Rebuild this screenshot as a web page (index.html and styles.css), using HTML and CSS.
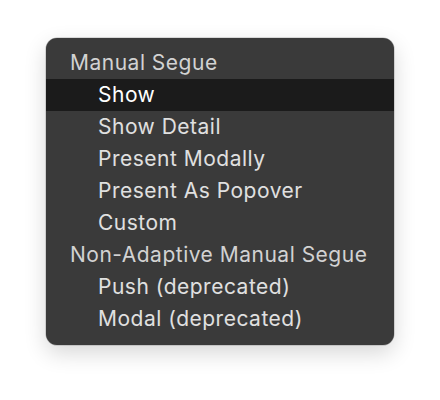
FILE: index.html
```html
<!DOCTYPE html>
<html>
<head>
<meta charset="utf-8">
<link rel="stylesheet" href="styles.css">
</head>
<body>
<div class="stage">
  <div class="menu">
    <div class="row header">Manual Segue</div>
    <div class="row item selected">Show</div>
    <div class="row item">Show Detail</div>
    <div class="row item">Present Modally</div>
    <div class="row item">Present As Popover</div>
    <div class="row item">Custom</div>
    <div class="row header">Non-Adaptive Manual Segue</div>
    <div class="row item">Push (deprecated)</div>
    <div class="row item">Modal (deprecated)</div>
  </div>
</div>
</body>
</html>
```
FILE: styles.css
```css
html, body {
  margin: 0;
  padding: 0;
  background: #ffffff;
}
.stage {
  width: 440px;
  height: 400px;
  padding: 38px 0 0 46px;
  box-sizing: border-box;
}
.menu {
  width: 348px;
  box-sizing: border-box;
  padding: 9px 0 10px;
  background: #3a3a3a;
  border-radius: 11px;
  box-shadow: 0 0 0 0.5px rgba(0,0,0,0.25), 0 8px 22px rgba(0,0,0,0.16);
  font-family: Inter, "Liberation Sans", sans-serif;
  font-size: 21px;
  letter-spacing: 0.5px;
  color: #e0e0e0;
}
.row {
  height: 32px;
  line-height: 32px;
  white-space: nowrap;
}
.header {
  padding-left: 24px;
  color: #d2d2d2;
}
.item {
  padding-left: 52px;
}
.selected {
  background: #1b1b1b;
  color: #ffffff;
}
```
